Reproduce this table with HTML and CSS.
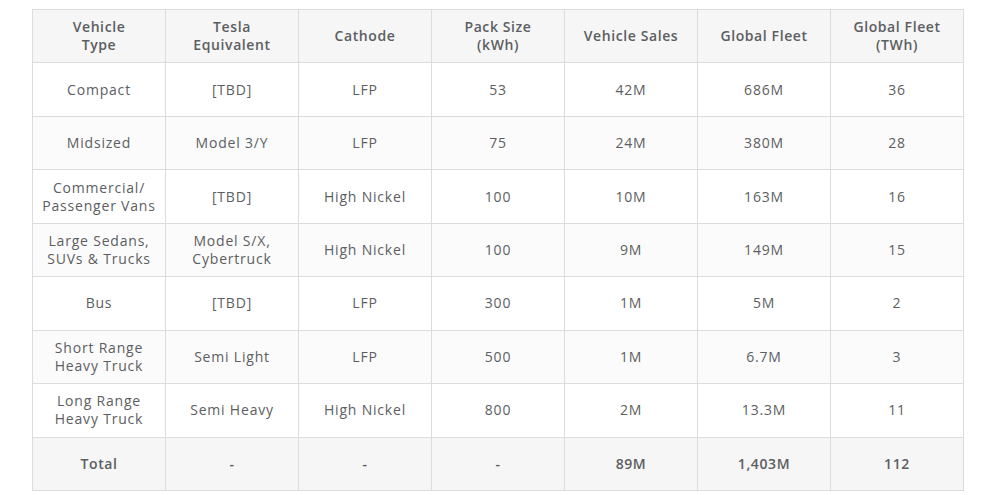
FILE: index.html
```html
<!DOCTYPE html>
<html>
<head>
<meta charset="utf-8">
<link rel="stylesheet" href="styles.css">
</head>
<body>
<table class="fleet">
  <thead>
    <tr class="row-shade">
      <th>Vehicle<br>Type</th>
      <th>Tesla<br>Equivalent</th>
      <th>Cathode</th>
      <th>Pack Size<br>(kWh)</th>
      <th>Vehicle Sales</th>
      <th>Global Fleet</th>
      <th>Global Fleet<br>(TWh)</th>
    </tr>
  </thead>
  <tbody>
    <tr><td>Compact</td><td>[TBD]</td><td>LFP</td><td>53</td><td>42M</td><td>686M</td><td>36</td></tr>
    <tr class="row-stripe"><td>Midsized</td><td>Model 3/Y</td><td>LFP</td><td>75</td><td>24M</td><td>380M</td><td>28</td></tr>
    <tr><td>Commercial/<br>Passenger Vans</td><td>[TBD]</td><td>High Nickel</td><td>100</td><td>10M</td><td>163M</td><td>16</td></tr>
    <tr class="row-stripe"><td>Large Sedans,<br>SUVs &amp; Trucks</td><td>Model S/X,<br>Cybertruck</td><td>High Nickel</td><td>100</td><td>9M</td><td>149M</td><td>15</td></tr>
    <tr><td>Bus</td><td>[TBD]</td><td>LFP</td><td>300</td><td>1M</td><td>5M</td><td>2</td></tr>
    <tr class="row-stripe"><td>Short Range<br>Heavy Truck</td><td>Semi Light</td><td>LFP</td><td>500</td><td>1M</td><td>6.7M</td><td>3</td></tr>
    <tr><td>Long Range<br>Heavy Truck</td><td>Semi Heavy</td><td>High Nickel</td><td>800</td><td>2M</td><td>13.3M</td><td>11</td></tr>
    <tr class="row-shade row-total"><td>Total</td><td>-</td><td>-</td><td>-</td><td>89M</td><td>1,403M</td><td>112</td></tr>
  </tbody>
</table>
</body>
</html>
```
FILE: styles.css
```css
html, body {
  margin: 0;
  padding: 0;
  background: #ffffff;
}
body {
  padding: 9px 0 0 32px;
  font-family: "Open Sans", "Liberation Sans", sans-serif;
  color: #5c5e62;
}
.fleet {
  border-collapse: collapse;
  table-layout: fixed;
  width: 932px;
}
.fleet tr {
  height: 53.45px;
}
.fleet th,
.fleet td {
  border: 1px solid #dcdcdc;
  text-align: center;
  vertical-align: middle;
  font-size: 14px;
  line-height: 18px;
  letter-spacing: 0.8px;
  padding: 0;
}
.fleet th {
  font-weight: 600;
  letter-spacing: 0.6px;
}
.fleet td {
  font-weight: 400;
}
.row-shade {
  background: #f6f6f6;
}
.row-stripe {
  background: #fbfbfb;
}
.row-total td {
  font-weight: 600;
  letter-spacing: 0.6px;
}
```
